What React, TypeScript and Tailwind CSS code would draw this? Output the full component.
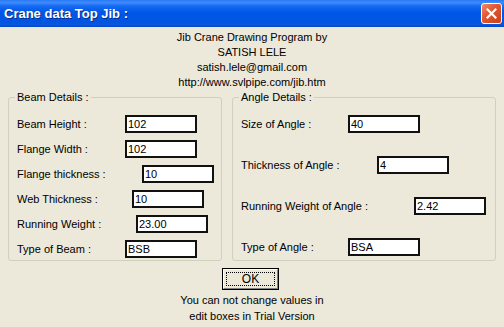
const beamRows = [
  { label: "Beam Height :", value: "102", labelW: "w-[108px]" },
  { label: "Flange Width :", value: "102", labelW: "w-[108px]" },
  { label: "Flange thickness :", value: "10", labelW: "w-[125px]" },
  { label: "Web Thickness :", value: "10", labelW: "w-[115px]" },
  { label: "Running Weight :", value: "23.00", labelW: "w-[119px]" },
  { label: "Type of Beam :", value: "BSB", labelW: "w-[108px]" },
];

const angleRows = [
  { label: "Size of Angle :", value: "40", labelW: "w-[107px]" },
  { label: "Thickness of Angle :", value: "4", labelW: "w-[136px]" },
  { label: "Running Weight of Angle :", value: "2.42", labelW: "w-[173px]" },
  { label: "Type of Angle :", value: "BSA", labelW: "w-[107px]" },
];

function Field({ label, value, labelW }: { label: string; value: string; labelW: string }) {
  return (
    <div className="flex items-center h-[18px]">
      <span className={`${labelW} shrink-0 whitespace-nowrap`}>{label}</span>
      <input
        readOnly
        defaultValue={value}
        className="w-[72px] h-[18px] border-2 border-[#111] bg-white px-[1px] text-[11px] leading-[14px] text-black outline-none"
        style={{ fontFamily: '"Liberation Sans", Arial, sans-serif' }}
      />
    </div>
  );
}

function Group({ title, width, gap, pb, children }: { title: string; width: string; gap: string; pb: string; children: React.ReactNode }) {
  return (
    <fieldset className={`${width} border border-[#d0d0bf] rounded-[3px] pl-[8px] pr-[4px] ${pb}`}>
      <legend className="-ml-[2px] px-[2px] leading-[13px] text-[11px]">{title}</legend>
      <div className={`flex flex-col ${gap} pt-[11px]`}>{children}</div>
    </fieldset>
  );
}

export default function App() {
  return (
    <div
      className="w-[504px] h-[327px] overflow-hidden bg-[#ece8da] text-black text-[11px] flex flex-col"
      style={{ fontFamily: '"Liberation Sans", Arial, sans-serif' }}
    >
      {/* Title bar */}
      <div className="h-[27px] shrink-0 flex items-center justify-between pl-[4px] pr-[2px] bg-[linear-gradient(to_bottom,#2a78f5_0%,#3d8dff_10%,#166af0_22%,#0058e8_45%,#0054e3_80%,#0a56dc_92%,#0046c4_100%)]">
        <span className="text-white font-bold text-[13px] leading-none [text-shadow:1px_1px_0_#0c2a8a]">
          Crane data Top Jib :
        </span>
        <button className="w-[21px] h-[21px] rounded-[3px] border border-white bg-[linear-gradient(135deg,#f08a6a_0%,#e25a34_40%,#c8401b_100%)] flex items-center justify-center">
          <svg width="11" height="11" viewBox="0 0 11 11">
            <path d="M1.5 1.5 L9.5 9.5 M9.5 1.5 L1.5 9.5" stroke="white" strokeWidth="2.2" strokeLinecap="square" />
          </svg>
        </button>
      </div>

      {/* Header text */}
      <div className="pt-[3px] flex flex-col items-center leading-[15px] text-[11px]">
        <span>Jib Crane Drawing Program by</span>
        <span>SATISH LELE</span>
        <span>satish.lele@gmail.com</span>
        <span>http://www.svlpipe.com/jib.htm</span>
      </div>

      {/* Groups */}
      <div className="mt-[1px] px-[8px] flex gap-[10px]">
        <Group title="Beam Details :" width="w-[214px]" gap="gap-[7px]" pb="pb-[2px]">
          {beamRows.map((r) => (
            <Field key={r.label} {...r} />
          ))}
        </Group>
        <Group title="Angle Details :" width="w-[264px]" gap="gap-[23px]" pb="pb-[4px]">
          {angleRows.map((r) => (
            <Field key={r.label} {...r} />
          ))}
        </Group>
      </div>

      {/* OK button */}
      <button className="mt-[7px] ml-[222px] self-start w-[57px] h-[22px] border border-black bg-[#ece9d8] p-0">
        <div className="w-full h-full border-l border-t border-white border-r border-b border-r-[#808080] border-b-[#808080] p-[2px]">
          <div className="w-full h-full border border-dotted border-black flex items-center justify-center text-[12px] leading-none">
            OK
          </div>
        </div>
      </button>

      {/* Footer */}
      <div className="mt-[2px] flex flex-col items-center leading-[16px] text-[11px]">
        <span>You can not change values in</span>
        <span>edit boxes in Trial Version</span>
      </div>
    </div>
  );
}
